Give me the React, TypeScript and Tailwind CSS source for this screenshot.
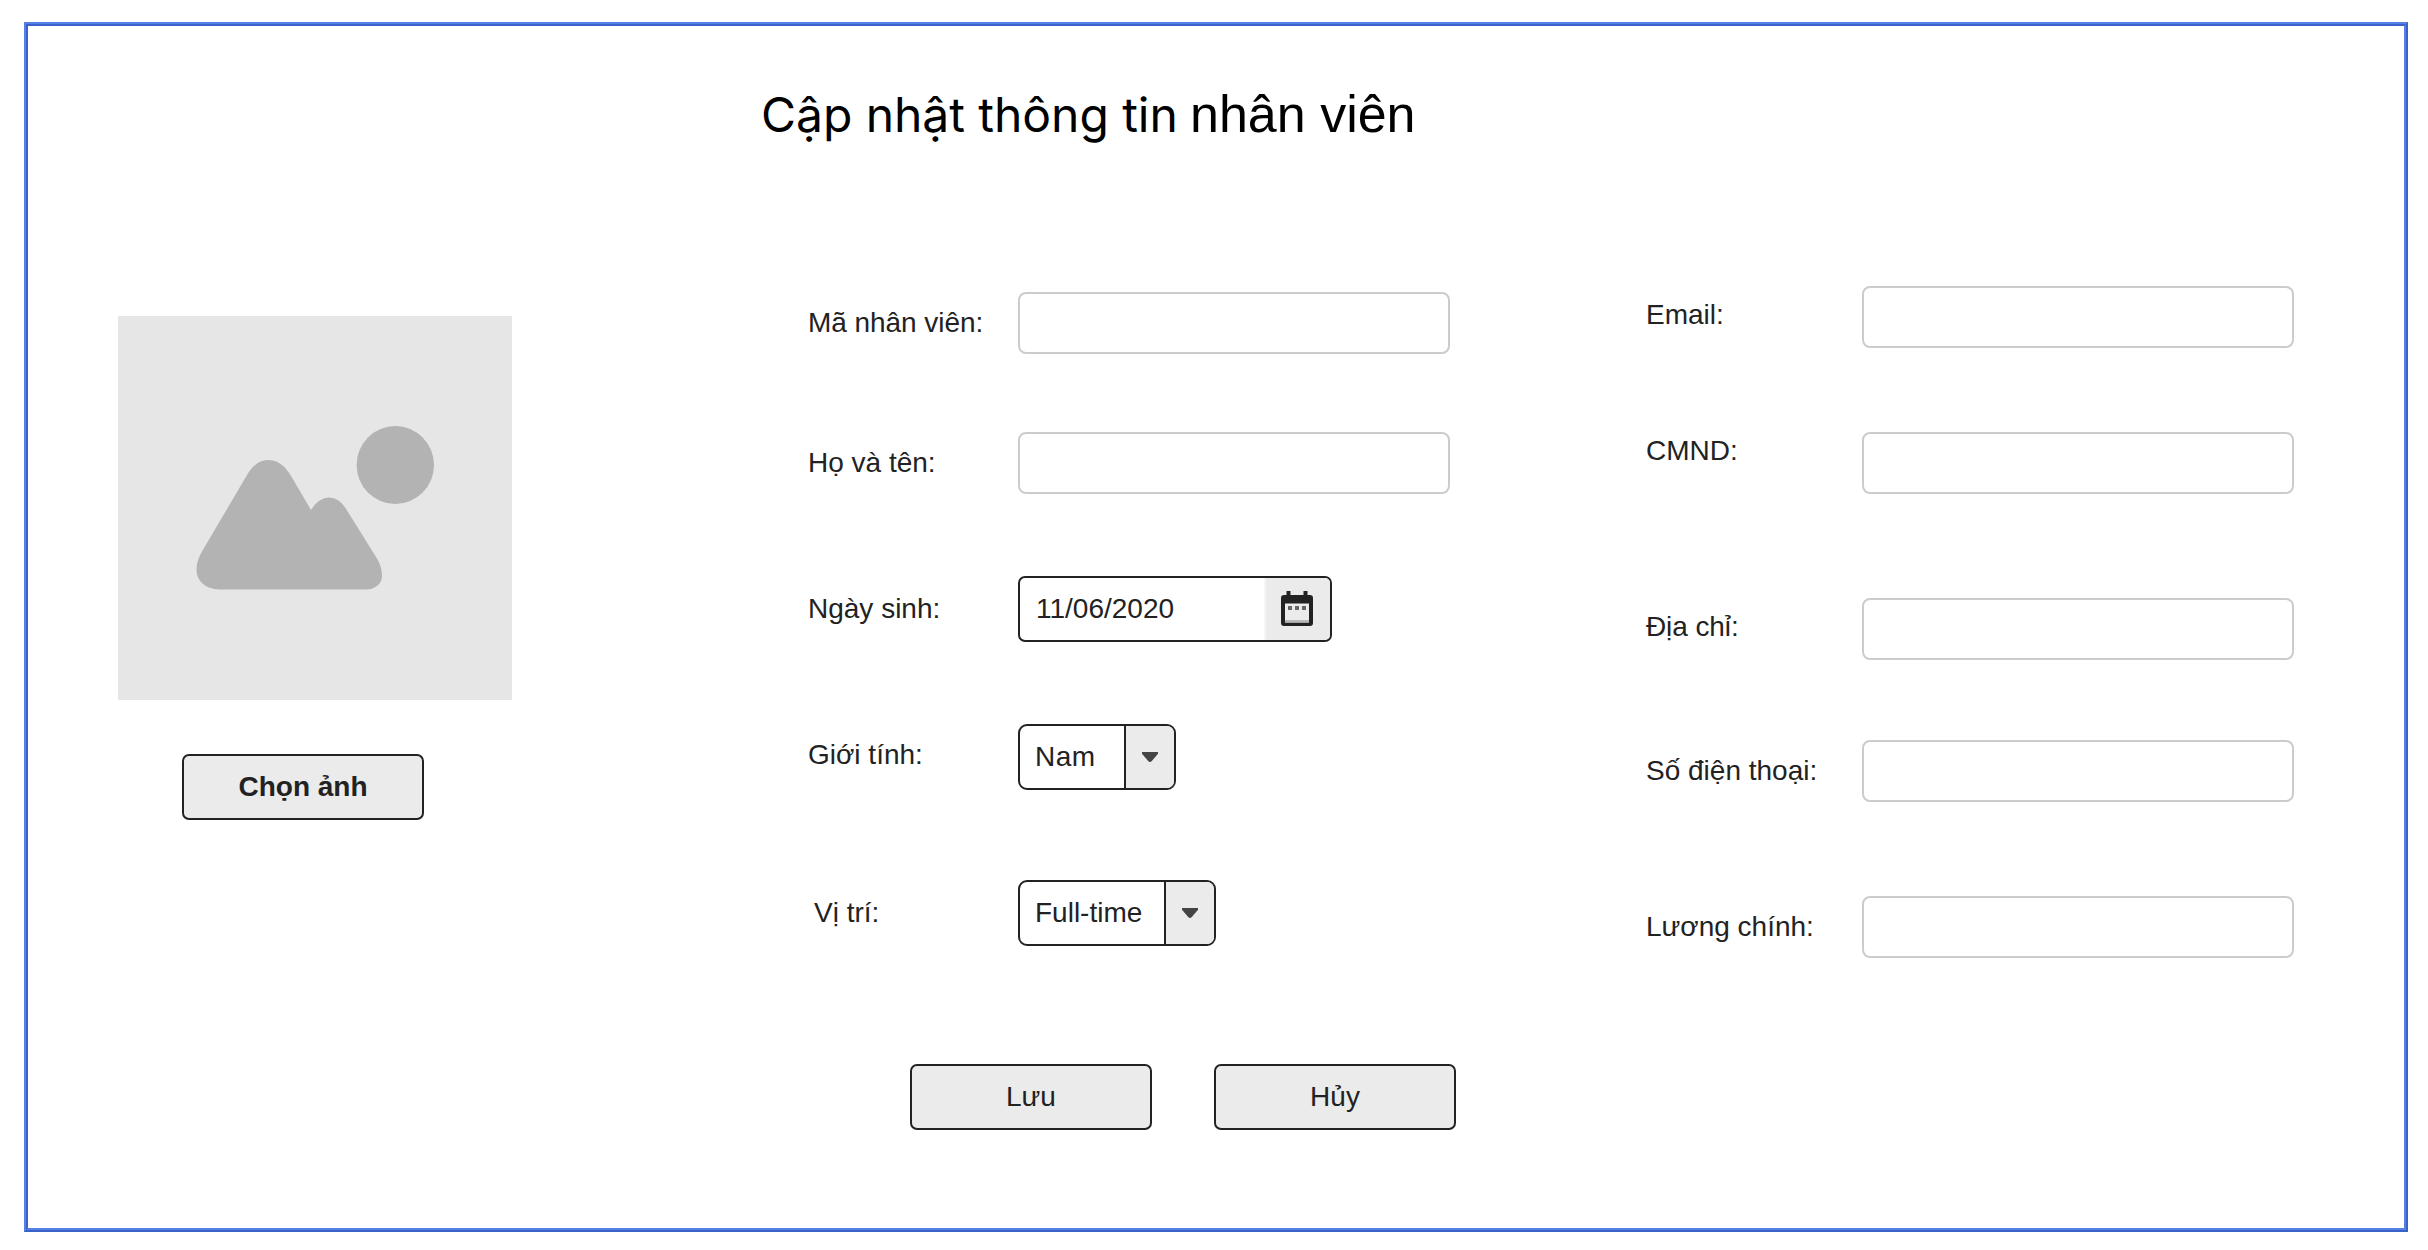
import React from "react";

const inputClass =
  "block h-[62px] w-[432px] rounded-[8px] border-2 border-[#cccccc] bg-white px-4 outline-none";
const buttonClass =
  "block h-[66px] w-[242px] rounded-[7px] border-2 border-[#222222] bg-[#ebebeb] text-center leading-[62px]";

function Row({
  label,
  labelClass,
  className,
  children,
}: {
  label: string;
  labelClass: string;
  className: string;
  children: React.ReactNode;
}) {
  return (
    <div className={`flex items-start ${className}`}>
      <div className={`shrink-0 leading-[33px] whitespace-nowrap ${labelClass}`}>{label}</div>
      {children}
    </div>
  );
}

function Select({ value, valueClass }: { value: string; valueClass: string }) {
  return (
    <button className="flex h-[66px] overflow-hidden rounded-[9px] border-2 border-[#222222] bg-white text-left leading-[62px]">
      <span className={`block h-full pl-[15px] ${valueClass}`}>{value}</span>
      <span className="flex h-full w-[50px] justify-center border-l-2 border-[#222222] bg-[#ebebeb] pt-[26px]">
        <svg width="16" height="10" viewBox="0 0 16 10">
          <path d="M0 0H16V1.8L9.6 9.2Q8 10.6 6.4 9.2L0 1.8Z" fill="#444444" />
        </svg>
      </span>
    </button>
  );
}

function CalendarIcon() {
  return (
    <svg width="32" height="36" viewBox="0 0 32 36" fill="#222222">
      <path
        d="M5.500 0h4v4h13V0h4v4h2.500a3 3 0 0 1 3 3v25a3 3 0 0 1-3 3H3a3 3 0 0 1-3-3V7a3 3 0 0 1 3-3h2.500zM4 12.500v19h24v-19z"
        fillRule="evenodd"
      />
      <path d="M7 15h4v4H7zM14 15h4v4h-4zM21 15h4v4h-4z" fill="#666666" />
      <path d="M4 29h24v2.500H4z" fill="#b8b8b8" />
    </svg>
  );
}

function PhotoPlaceholder() {
  return (
    <svg className="block" width="394" height="384" viewBox="118 316 394 384">
      <path d="M118 316h394v384H118z" fill="#e6e6e6" />
      <ellipse cx="395.300" cy="465" rx="38.700" ry="39" fill="#b3b3b3" />
      <path
        d="M247 475C254 463 262 460 268.500 460S283 463 290.500 475L304 498Q308 505 311 510Q319 497.500 329 497.500Q339 497.500 345.500 508L376 557C380 563 382 569 382 576Q382 582 377 586Q372 589.500 366 589.500H220C204 589 196.500 580 196.500 569Q196.500 561 202 551.500Z"
        fill="#b3b3b3"
      />
    </svg>
  );
}

export default function App() {
  return (
    <div className="h-[1250px] w-[2428px] overflow-hidden bg-white pt-[22px] pl-[24px] font-['Liberation_Sans',Arial,sans-serif] text-[28px] text-[#222222]">
      <div className="h-[1210px] w-[2384px] border-2 border-t-[#5580e6] border-r-[#3a62c8] border-b-[#3a62c8] border-l-[#5580e6]">
        <div className="h-full border-2 border-t-[#3a62c8] border-r-[#5580e6] border-b-[#5580e6] border-l-[#3a62c8]">
          <h1 className="mt-[56px] flex h-[65px] items-baseline pl-[733px] whitespace-nowrap text-black">
            <span className="w-[429px] font-['Inter',sans-serif] text-[48px] leading-[64px] tracking-[-0.05px]">
              Cập nhật thông tin
            </span>
            <span className="text-[52px] leading-[64px]">nhân viên</span>
          </h1>

          <div className="flex items-start">
            <section className="mt-[169px] ml-[90px] w-[690px]">
              <PhotoPlaceholder />
              <button className={`mt-[54px] ml-[64px] font-bold ${buttonClass}`}>Chọn ảnh</button>
            </section>

            <section className="mt-[145px] w-[838px]">
              <Row className="h-[140px]" label="Mã nhân viên:" labelClass="mt-[14px] w-[210px] tracking-[-0.05px]">
                <input className={inputClass} />
              </Row>
              <Row className="h-[144px]" label="Họ và tên:" labelClass="mt-[14px] w-[210px]">
                <input className={inputClass} />
              </Row>
              <Row className="h-[148px]" label="Ngày sinh:" labelClass="mt-[16px] w-[210px]">
                <div className="flex h-[66px] w-[314px] overflow-hidden rounded-[7px] border-2 border-[#222222] bg-white">
                  <span className="w-[244px] pl-[16px] leading-[62px]">11/06/2020</span>
                  <span className="flex flex-1 justify-center border-l-2 border-[#f5f5f5] bg-[#ebebeb] pt-[13px] pr-[2px]">
                    <CalendarIcon />
                  </span>
                </div>
              </Row>
              <Row className="h-[156px]" label="Giới tính:" labelClass="mt-[14px] w-[210px]">
                <Select value="Nam" valueClass="w-[104px] tracking-[0.5px]" />
              </Row>
              <Row className="h-[184px]" label="Vị trí:" labelClass="mt-[16px] w-[210px] pl-[6px]">
                <Select value="Full-time" valueClass="w-[144px]" />
              </Row>
              <div className="ml-[102px] flex gap-[62px]">
                <button className={buttonClass}>Lưu</button>
                <button className={buttonClass}>Hủy</button>
              </div>
            </section>

            <section className="mt-[139px]">
              <Row className="h-[146px]" label="Email:" labelClass="mt-[12px] w-[216px]">
                <input className={inputClass} />
              </Row>
              <Row className="h-[166px]" label="CMND:" labelClass="mt-[2px] w-[216px]">
                <input className={inputClass} />
              </Row>
              <Row className="h-[142px]" label="Địa chỉ:" labelClass="mt-[12px] w-[216px] tracking-[-0.1px]">
                <input className={inputClass} />
              </Row>
              <Row className="h-[156px]" label="Số điện thoại:" labelClass="mt-[14px] w-[216px]">
                <input className={inputClass} />
              </Row>
              <Row className="h-[62px]" label="Lương chính:" labelClass="mt-[14px] w-[216px]">
                <input className={inputClass} />
              </Row>
            </section>
          </div>
        </div>
      </div>
    </div>
  );
}
